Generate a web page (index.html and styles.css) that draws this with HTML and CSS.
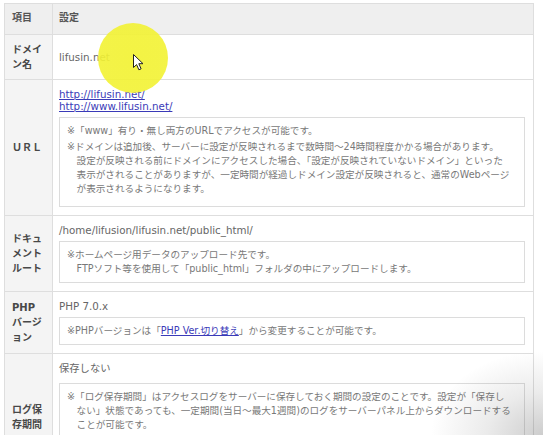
FILE: index.html
```html
<!DOCTYPE html>
<html lang="ja">
<head>
<meta charset="utf-8">
<title>ドメイン設定</title>
<link rel="stylesheet" href="styles.css">
</head>
<body>
<div class="page">
  <table class="spec">
    <colgroup><col class="col-label"><col></colgroup>
    <thead>
      <tr class="head"><th>項目</th><th>設定</th></tr>
    </thead>
    <tbody>
      <tr>
        <th class="label label--domain">ドメイ<br>ン名</th>
        <td class="value"><div class="line">lifusin.net</div></td>
      </tr>
      <tr>
        <th class="label">ＵＲＬ</th>
        <td class="value">
          <a class="line link" href="#">http://lifusin.net/</a>
          <a class="line link" href="#">http://www.lifusin.net/</a>
          <div class="note note--url">
            <p>※「www」有り・無し両方のURLでアクセスが可能です。</p>
            <p>※ドメインは追加後、サーバーに設定が反映されるまで数時間～24時間程度かかる場合があります。<br>設定が反映される前にドメインにアクセスした場合、「設定が反映されていないドメイン」といった<br>表示がされることがありますが、一定時間が経過しドメイン設定が反映されると、通常のWebページ<br>が表示されるようになります。</p>
          </div>
        </td>
      </tr>
      <tr>
        <th class="label">ドキュ<br>メント<br>ルート</th>
        <td class="value">
          <div class="line">/home/lifusion/lifusin.net/public_html/</div>
          <div class="note">
            <p>※ホームページ用データのアップロード先です。<br>FTPソフト等を使用して「public_html」フォルダの中にアップロードします。</p>
          </div>
        </td>
      </tr>
      <tr>
        <th class="label">PHP<br>バージ<br>ョン</th>
        <td class="value">
          <div class="line">PHP 7.0.x</div>
          <div class="note">
            <p>※PHPバージョンは「<a class="link" href="#">PHP Ver.切り替え</a>」から変更することが可能です。</p>
          </div>
        </td>
      </tr>
      <tr>
        <th class="label">ログ保<br>存期間</th>
        <td class="value value--log">
          <div class="line">保存しない</div>
          <div class="note note--log">
            <p>※「ログ保存期間」はアクセスログをサーバーに保存しておく期間の設定のことです。設定が「保存し<br>ない」状態であっても、一定期間(当日～最大1週間)のログをサーバーパネル上からダウンロードする<br>ことが可能です。</p>
          </div>
        </td>
      </tr>
    </tbody>
  </table>
  <div class="spot"></div>
  <svg class="cursor" width="12" height="17" viewBox="0 0 12 17">
    <path d="M0.5 0.5 L0.5 13.5 L3.6 10.6 L5.9 15.8 L8.1 14.8 L5.8 9.7 L10 9.7 Z" fill="#fff" stroke="#222" stroke-width="1" stroke-linejoin="round"/>
  </svg>
  <div class="vignette"></div>
</div>
</body>
</html>
```

FILE: styles.css
```css
html, body {
  margin: 0;
  background: #ffffff;
}

body {
  font-family: "DejaVu Sans", "Noto Sans CJK JP", sans-serif;
  color: #666666;
}

.page {
  position: relative;
  box-sizing: border-box;
  width: 543px;
  height: 435px;
  padding: 3px 0 0 4px;
  overflow: hidden;
}

.spec {
  border-collapse: collapse;
  table-layout: fixed;
  width: 530px;
}

.col-label {
  width: 48px;
}

.spec th,
.spec td {
  border: 1px solid #dedede;
  text-align: left;
}

.head th {
  background: #efefef;
  padding: 8px 7px 10px;
  font-size: 10px;
  line-height: 12px;
  font-weight: bold;
  color: #555555;
}

.head th + th {
  padding-left: 6px;
}

.label {
  background: #f4f4f4;
  padding: 7px 4px 7px 7px;
  font-size: 10px;
  line-height: 15px;
  font-weight: bold;
  color: #484848;
  vertical-align: middle;
}

.value {
  padding: 8px 8px 8px 6px;
  vertical-align: middle;
}

.value--log {
  padding-bottom: 40px;
}

.line {
  display: block;
  font-size: 10.3px;
  line-height: 12px;
  color: #666666;
}

.link {
  color: #3a3ab8;
  text-decoration: underline;
}

.note {
  margin-top: 5px;
  border: 1px solid #dcdcdc;
  background: #ffffff;
  padding: 6px 8px 6px 7px;
  font-size: 9.6px;
  line-height: 14px;
  color: #787878;
}

.note p {
  margin: 0;
  padding-left: 1em;
  text-indent: -1em;
  white-space: nowrap;
}

.note p + p {
  margin-top: 2px;
}

.note--url {
  padding-bottom: 10px;
}

.note--log {
  margin-top: 9px;
}

.spot {
  position: absolute;
  left: 98px;
  top: 23px;
  width: 70px;
  height: 70px;
  border-radius: 50%;
  background: radial-gradient(circle, rgba(242, 242, 52, 0.92) 0%, rgba(242, 242, 52, 0.9) 82%, rgba(242, 242, 52, 0.4) 94%, rgba(242, 242, 52, 0) 100%);
}

.cursor {
  position: absolute;
  left: 133px;
  top: 54px;
}

.vignette {
  position: absolute;
  right: 0;
  bottom: 0;
  width: 160px;
  height: 120px;
  background: radial-gradient(ellipse 100% 100% at 100% 100%, rgba(90, 90, 90, 0.3) 0%, rgba(90, 90, 90, 0.12) 35%, rgba(90, 90, 90, 0) 70%);
  pointer-events: none;
}
```
